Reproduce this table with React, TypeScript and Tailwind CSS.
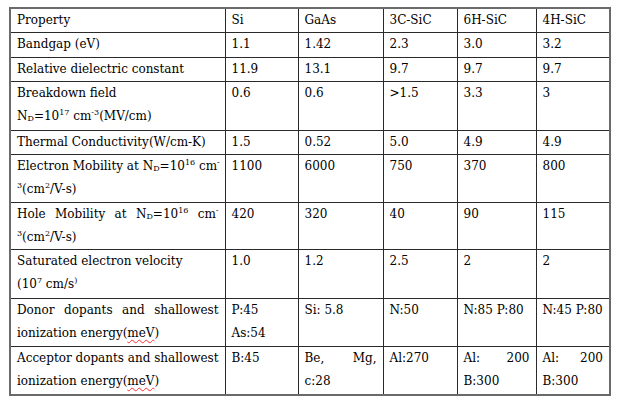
const COLS = ["w-[215px]", "w-[73px]", "w-[85px]", "w-[74px]", "w-[79px]", "w-[74px]"];

function Sup({ children }: { children: React.ReactNode }) {
  return <span className="text-[8px] leading-none relative -top-[5px]">{children}</span>;
}

function Sub({ children }: { children: React.ReactNode }) {
  return <span className="text-[8px] leading-none relative top-[1px]">{children}</span>;
}

// first line of a wrapped paragraph, spread edge to edge like Word does
function J({ children }: { children: React.ReactNode }) {
  return <div className="text-justify [text-align-last:justify] whitespace-nowrap">{children}</div>;
}

function Mev() {
  return (
    <>
      ionization energy(<span className="underline decoration-wavy decoration-red-500 decoration-1 underline-offset-2">meV</span>)
    </>
  );
}

const ND = (
  <>
    N<Sub>D</Sub>=10<Sup>16</Sup>
  </>
);

type Row = { h: string; cells: React.ReactNode[] };

const ROWS: Row[] = [
  { h: "h-[24px]", cells: ["Property", "Si", "GaAs", "3C-SiC", "6H-SiC", "4H-SiC"] },
  { h: "h-[25px]", cells: ["Bandgap (eV)", "1.1", "1.42", "2.3", "3.0", "3.2"] },
  { h: "h-[24px]", cells: ["Relative dielectric constant", "11.9", "13.1", "9.7", "9.7", "9.7"] },
  {
    h: "h-[49px]",
    cells: [
      <>
        <div>Breakdown field</div>
        <div>
          N<Sub>D</Sub>=10<Sup>17</Sup> cm<Sup>-3</Sup>(MV/cm)
        </div>
      </>,
      "0.6",
      "0.6",
      ">1.5",
      "3.3",
      "3",
    ],
  },
  { h: "h-[23px]", cells: ["Thermal Conductivity(W/cm-K)", "1.5", "0.52", "5.0", "4.9", "4.9"] },
  {
    h: "h-[48px]",
    cells: [
      <>
        <J>
          Electron Mobility at {ND} cm<Sup>-</Sup>
        </J>
        <div>
          <Sup>3</Sup>(cm<Sup>2</Sup>/V-s)
        </div>
      </>,
      "1100",
      "6000",
      "750",
      "370",
      "800",
    ],
  },
  {
    h: "h-[47px]",
    cells: [
      <>
        <J>
          Hole Mobility at {ND} cm<Sup>-</Sup>
        </J>
        <div>
          <Sup>3</Sup>(cm<Sup>2</Sup>/V-s)
        </div>
      </>,
      "420",
      "320",
      "40",
      "90",
      "115",
    ],
  },
  {
    h: "h-[49px]",
    cells: [
      <>
        <div>Saturated electron velocity</div>
        <div>
          (10<Sup>7</Sup> cm/s<Sup>)</Sup>
        </div>
      </>,
      "1.0",
      "1.2",
      "2.5",
      "2",
      "2",
    ],
  },
  {
    h: "h-[48px]",
    cells: [
      <>
        <J>Donor dopants and shallowest</J>
        <div>
          <Mev />
        </div>
      </>,
      <>
        <div>P:45</div>
        <div>As:54</div>
      </>,
      "Si: 5.8",
      "N:50",
      "N:85 P:80",
      "N:45 P:80",
    ],
  },
  {
    h: "h-[48px]",
    cells: [
      <>
        <J>Acceptor dopants and shallowest</J>
        <div>
          <Mev />
        </div>
      </>,
      "B:45",
      <>
        <J>Be, Mg,</J>
        <div>c:28</div>
      </>,
      "Al:270",
      <>
        <J>Al: 200</J>
        <div>B:300</div>
      </>,
      <>
        <J>Al: 200</J>
        <div>B:300</div>
      </>,
    ],
  },
];

export default function App() {
  return (
    <div className="w-[619px] h-[402px] bg-white pt-[7px] pl-[9px] font-['DejaVu_Serif',serif]">
      <table className="table-fixed border-collapse border-2 border-[#6a6a6a] w-[602px] text-[12px] leading-[23px] text-black">
        <colgroup>
          {COLS.map((c, i) => (
            <col key={i} className={c} />
          ))}
        </colgroup>
        <tbody>
          {ROWS.map((r, i) => (
            <tr key={i} className={r.h}>
              {r.cells.map((c, j) => (
                <td key={j} className="border border-[#2a2a2a] align-top px-[6px] py-0">
                  {c}
                </td>
              ))}
            </tr>
          ))}
        </tbody>
      </table>
    </div>
  );
}
